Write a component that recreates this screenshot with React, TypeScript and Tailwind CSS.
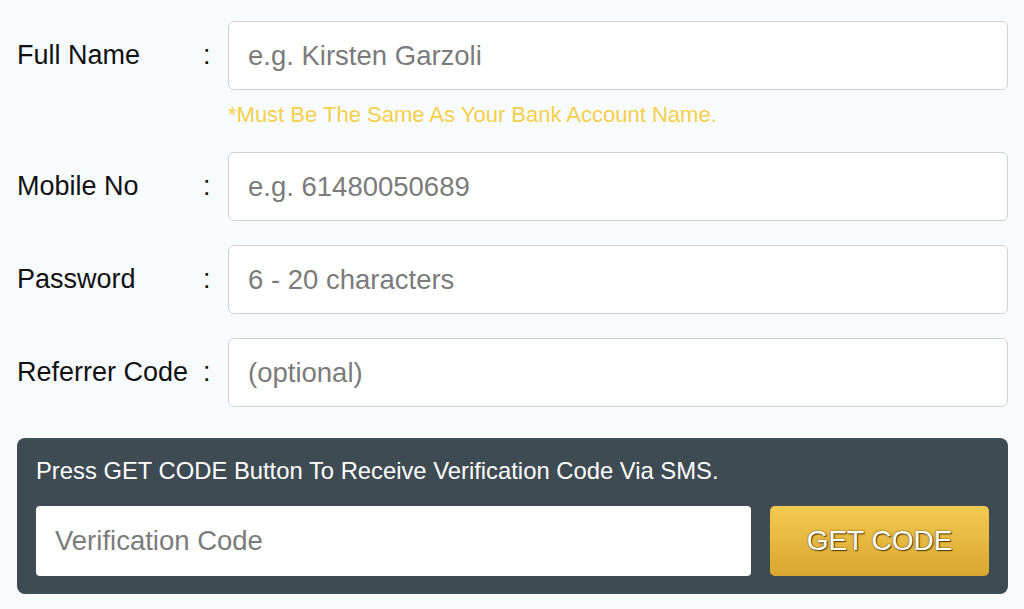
import React from 'react';

const font = { fontFamily: '"Liberation Sans", Arial, sans-serif' };

interface FieldRowProps {
  label: string;
  placeholder: string;
  type?: string;
  hint?: string;
}

function FieldRow({ label, placeholder, type = 'text', hint }: FieldRowProps) {
  return (
    <div>
      <div className="flex items-center">
        <label className="w-[186px] shrink-0 text-[27px] text-[#111]">{label}</label>
        <span className="w-[25px] shrink-0 text-[27px] text-[#111]">:</span>
        <input
          type={type}
          placeholder={placeholder}
          className="h-[69px] flex-1 rounded-[6px] border-[1.5px] border-[#cfd2d4] bg-white px-[19px] text-[27.5px] text-[#333] placeholder:text-[#7b7b7b] outline-none"
        />
      </div>
      {hint && (
        <p className="ml-[211px] mt-[12px] text-[22px] leading-[26px] text-[#f5cf4a]">{hint}</p>
      )}
    </div>
  );
}

export default function App() {
  return (
    <div className="min-h-[609px] w-full bg-[#f7fbfd] px-[17px] pr-[16px] pt-[21px]" style={font}>
      <div className="flex flex-col">
        <FieldRow
          label="Full Name"
          placeholder="e.g. Kirsten Garzoli"
          hint="*Must Be The Same As Your Bank Account Name."
        />
        <div className="mt-[24px]">
          <FieldRow label="Mobile No" placeholder="e.g. 61480050689" type="tel" />
        </div>
        <div className="mt-[24px]">
          <FieldRow label="Password" placeholder="6 - 20 characters" type="password" />
        </div>
        <div className="mt-[24px]">
          <FieldRow label="Referrer Code" placeholder="(optional)" />
        </div>
      </div>

      <div className="mt-[31px] rounded-[8px] bg-[#3e4b53] px-[19px] pb-[18px] pt-[18px]">
        <p className="text-[23.8px] leading-[30px] text-white">
          Press GET CODE Button To Receive Verification Code Via SMS.
        </p>
        <div className="mt-[20px] flex gap-[19px]">
          <input
            type="text"
            placeholder="Verification Code"
            className="h-[70px] flex-1 rounded-[4px] bg-white px-[19px] text-[27.5px] text-[#333] placeholder:text-[#7b7b7b] outline-none"
          />
          <button
            type="button"
            className="h-[70px] w-[219px] rounded-[5px] bg-gradient-to-b from-[#f4ca50] to-[#d7a72e] text-[28px] text-white [text-shadow:0_0_2px_#5f4a0c,1px_1px_1px_#4f3d08]"
          >
            GET CODE
          </button>
        </div>
      </div>
    </div>
  );
}
